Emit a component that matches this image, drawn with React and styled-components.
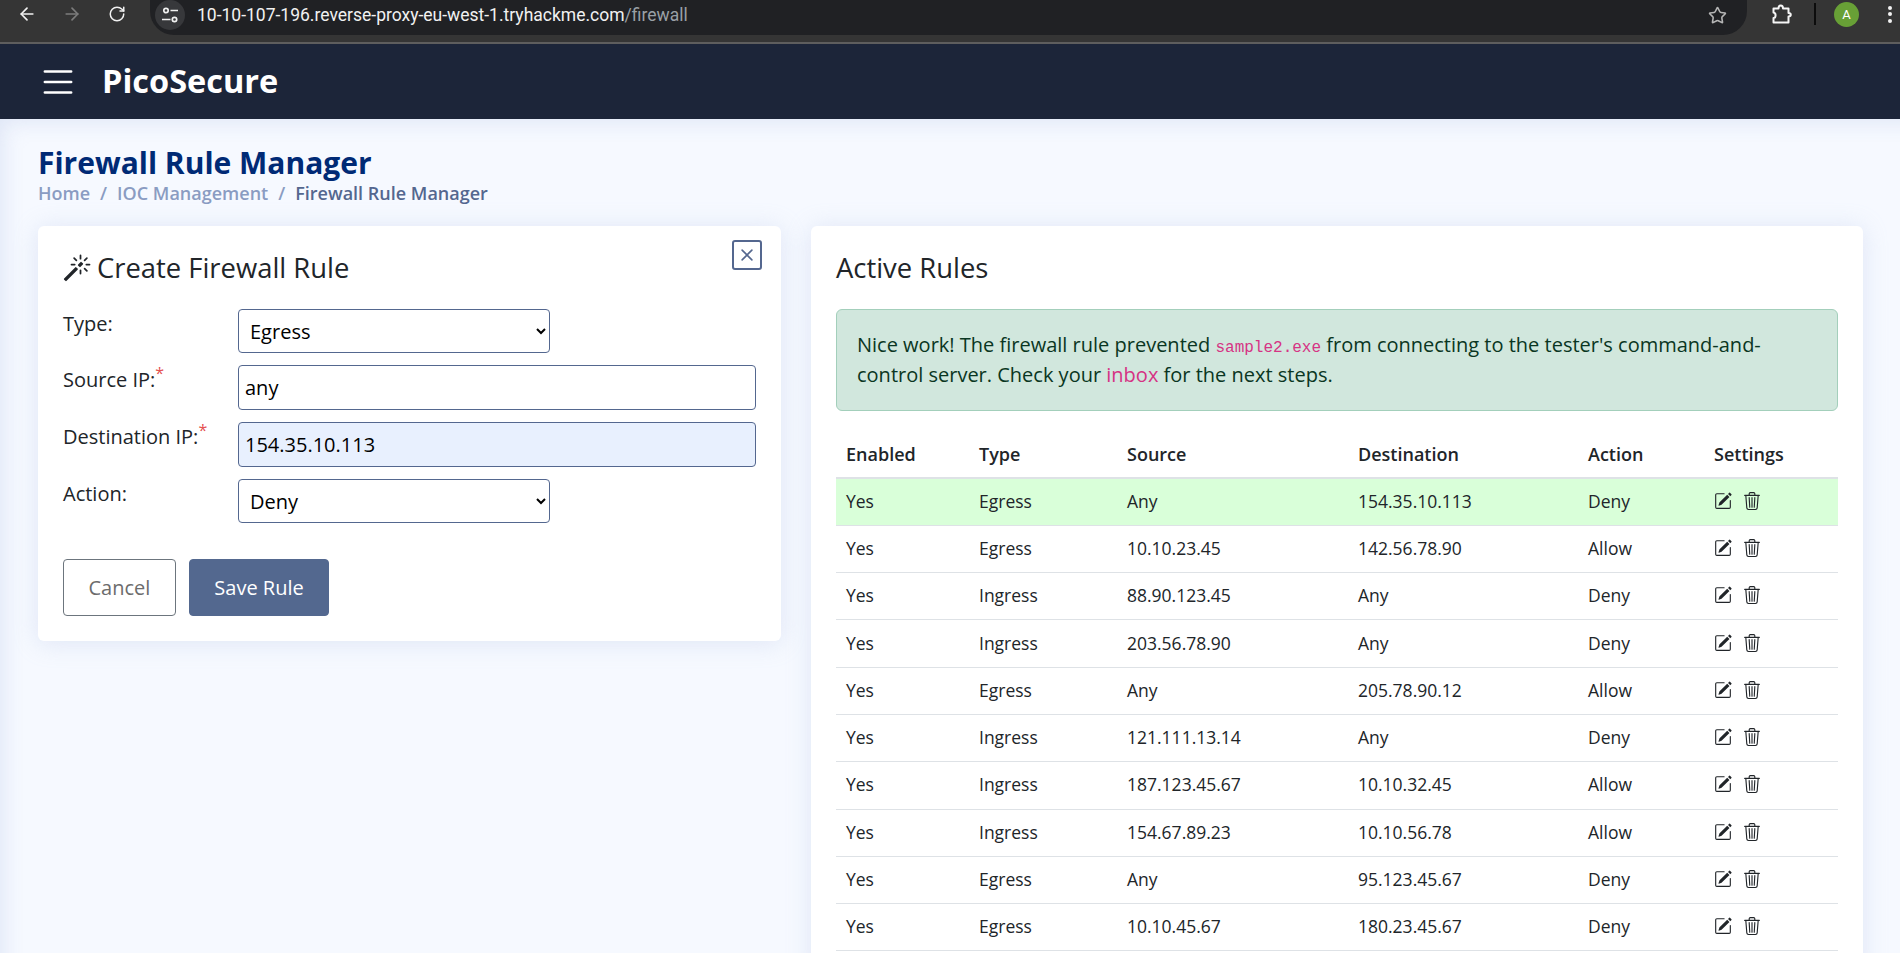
import styled, { createGlobalStyle } from 'styled-components';
import { ArrowLeft, ArrowRight, RotateCw, Star } from 'lucide-react';
import { BsList, BsMagic, BsPencilSquare, BsTrash3, BsX } from 'react-icons/bs';

const GlobalStyle = createGlobalStyle`
  * {
    box-sizing: border-box;
  }
  html,
  body {
    margin: 0;
    height: 100%;
    overflow: hidden;
  }
  body {
    font-family: 'Open Sans', 'Noto Sans', sans-serif;
    color: #212529;
    background: #f6f9ff;
  }
`;

const Screen = styled.div`
  height: 953px;
  overflow: hidden;
  display: flex;
  flex-direction: column;
`;

const BrowserBar = styled.div`
  flex: none;
  height: 44px;
  display: flex;
  align-items: flex-start;
  background: #353535;
  border-bottom: 2px solid #5e5e5e;
  padding-left: 17px;
  color: #fff;
`;

const NavButton = styled.span`
  width: 20px;
  height: 28px;
  margin-right: 25px;
  display: flex;
  align-items: center;
  justify-content: center;
  color: ${(props) => (props.$muted ? '#7c7c7c' : '#f1f1f1')};
`;

const AddressBar = styled.div`
  width: 1597px;
  height: 35px;
  margin-left: -2px;
  padding: 0 20px 5px 5px;
  display: flex;
  align-items: center;
  background: #202124;
  border-radius: 0 0 24px 24px;
`;

const TuneBadge = styled.span`
  width: 30px;
  height: 30px;
  flex: none;
  display: flex;
  align-items: center;
  justify-content: center;
  border-radius: 50%;
  background: #37383b;
  margin-right: 12px;
`;

const Url = styled.span`
  flex: 1;
  font-family: Roboto, 'Liberation Sans', sans-serif;
  font-size: 17.5px;
  color: #f1f1f1;
  white-space: nowrap;
`;

const UrlPath = styled.span`
  color: #9aa0a6;
`;

const BarTools = styled.div`
  flex: 1;
  height: 28px;
  display: flex;
  align-items: center;
  padding-left: 24px;
`;

const BarDivider = styled.span`
  width: 2px;
  height: 22px;
  margin: 0 18px 0 21px;
  background: #0c0c0c;
`;

const Avatar = styled.span`
  width: 25px;
  height: 25px;
  border-radius: 50%;
  background: #68a036;
  color: #fff;
  display: flex;
  align-items: center;
  justify-content: center;
  font-family: Roboto, sans-serif;
  font-size: 13px;
`;

const BarDots = styled.span`
  margin-left: 29px;
  display: flex;
  flex-direction: column;
  gap: 2.5px;
  i {
    width: 4px;
    height: 4px;
    border-radius: 50%;
    background: #f1f1f1;
  }
`;

const TopNav = styled.header`
  flex: none;
  height: 75px;
  display: flex;
  align-items: center;
  gap: 23px;
  padding-left: 37px;
  background: #1c2539;
  color: #fff;
`;

const Brand = styled.span`
  font-size: 32.5px;
  font-weight: 700;
  line-height: 1;
`;

const Main = styled.main`
  flex: 1;
  min-height: 0;
  padding: 25px 38px 0;
  background: #f6f9ff;
  box-shadow: inset 16px 16px 22px -14px rgba(190, 204, 232, 0.45);
`;

const PageTitle = styled.h1`
  margin: 0;
  font-size: 30px;
  line-height: 38px;
  font-weight: 700;
  color: #002a75;
`;

const Crumbs = styled.nav`
  display: flex;
  gap: 10px;
  font-size: 18px;
  line-height: 22px;
  font-weight: 600;
  color: #8a9cc2;
`;

const CrumbCurrent = styled.span`
  color: #54678f;
`;

const Columns = styled.div`
  display: grid;
  grid-template-columns: 743px 1052px;
  gap: 30px;
  align-items: start;
  margin-top: 22px;
`;

const Card = styled.section`
  position: relative;
  padding: 25px;
  background: #fff;
  border-radius: 6px;
  box-shadow: 0 2px 24px rgba(170, 186, 222, 0.3);
`;

const CardTitle = styled.h2`
  margin: 0 0 24px;
  display: flex;
  align-items: center;
  gap: 6px;
  font-size: 27.4px;
  line-height: 34px;
  font-weight: 400;
`;

const CloseButton = styled.button`
  position: absolute;
  top: 14px;
  right: 19px;
  width: 30px;
  height: 30px;
  padding: 0;
  display: flex;
  align-items: center;
  justify-content: center;
  background: #fff;
  color: #54678f;
  border: 2px solid #54678f;
  border-radius: 3px;
`;

const FormRow = styled.div`
  display: grid;
  grid-template-columns: 175px 1fr;
  margin-bottom: 12px;
`;

const FieldLabel = styled.label`
  font-size: 20px;
  line-height: 29px;
`;

const Required = styled.sup`
  color: #e4504f;
  font-size: 16px;
  line-height: 0;
`;

const SelectField = styled.select`
  width: 312px;
  height: 44px;
  padding: 0 7px;
  font-family: inherit;
  font-size: 20px;
  color: #000;
  background: #fff;
  border: 1px solid #54678f;
  border-radius: 4px;
`;

const TextField = styled.input`
  width: 518px;
  height: 45px;
  padding: 0 6px;
  font-family: inherit;
  font-size: 20px;
  color: #000;
  background: ${(props) => (props.$filled ? '#e8f0fe' : '#fff')};
  border: 1px solid #54678f;
  border-radius: 4px;
`;

const FormActions = styled.div`
  display: flex;
  gap: 13px;
  margin-top: 36px;
`;

const ActionButton = styled.button`
  height: 57px;
  padding: 0 24.5px;
  font-family: inherit;
  font-size: 20px;
  color: ${(props) => (props.$primary ? '#fff' : '#6c6c6c')};
  background: ${(props) => (props.$primary ? '#53688f' : '#fff')};
  border: 1px solid ${(props) => (props.$primary ? '#53688f' : '#6c757d')};
  border-radius: 4px;
`;

const Notice = styled.div`
  height: 102px;
  margin-bottom: 22px;
  padding: 20px;
  font-size: 20px;
  line-height: 30px;
  color: #0a3622;
  background: #d1e7dd;
  border: 1px solid #a3cfbb;
  border-radius: 6px;
`;

const InlineCode = styled.code`
  font-family: 'Liberation Mono', monospace;
  font-size: 16px;
  line-height: 1;
  color: #d63384;
`;

const NoticeLink = styled.a`
  color: #d63384;
  text-decoration: none;
`;

const RulesTable = styled.table`
  width: 100%;
  table-layout: fixed;
  border-collapse: collapse;
  font-size: 17.5px;
`;

const HeadCell = styled.th`
  height: 45px;
  padding: 0 10px 2px;
  text-align: left;
  font-size: 18px;
  font-weight: 600;
  border-bottom: 2px solid #dee2e6;
`;

const Row = styled.tr`
  background: ${(props) => (props.$active ? '#d9ffd9' : 'transparent')};
`;

const Cell = styled.td`
  height: 47.3px;
  padding: 0 10px 2px;
  border-bottom: 1px solid #dee2e6;
`;

const SettingIcons = styled.span`
  display: flex;
  align-items: center;
  gap: 11px;
  color: #212529;
`;

const columnWidths = [133, 148, 231, 230, 126, 134];

const rules = [
  ['Egress', 'Any', '154.35.10.113', 'Deny'],
  ['Egress', '10.10.23.45', '142.56.78.90', 'Allow'],
  ['Ingress', '88.90.123.45', 'Any', 'Deny'],
  ['Ingress', '203.56.78.90', 'Any', 'Deny'],
  ['Egress', 'Any', '205.78.90.12', 'Allow'],
  ['Ingress', '121.111.13.14', 'Any', 'Deny'],
  ['Ingress', '187.123.45.67', '10.10.32.45', 'Allow'],
  ['Ingress', '154.67.89.23', '10.10.56.78', 'Allow'],
  ['Egress', 'Any', '95.123.45.67', 'Deny'],
  ['Egress', '10.10.45.67', '180.23.45.67', 'Deny'],
];

function TuneIcon() {
  return (
    <svg width="18" height="18" viewBox="0 0 18 18" fill="none" stroke="#f1f1f1" strokeWidth="1.7">
      <circle cx="5" cy="4.5" r="2.2" />
      <path d="M9.5 4.5H17M1 13.5h8.5" />
      <circle cx="13.5" cy="13.5" r="2.2" />
    </svg>
  );
}

function PuzzleIcon() {
  return (
    <svg width="22" height="22" viewBox="0 0 22 22" fill="none" stroke="#f6f6f6" strokeWidth="2" strokeLinejoin="round">
      <path d="M2.500 5.500h5c0-4 4.500-4 4.500 0h5.500v4.500c3 0 3 3.500 0 3.500v6h-15v-4.500c2.500 0 3-5 0-5.500z" />
    </svg>
  );
}

export default function App() {
  return (
    <Screen>
      <GlobalStyle />
      <BrowserBar>
        <NavButton>
          <ArrowLeft size={20} />
        </NavButton>
        <NavButton $muted>
          <ArrowRight size={20} />
        </NavButton>
        <NavButton>
          <RotateCw size={18} />
        </NavButton>
        <AddressBar>
          <TuneBadge>
            <TuneIcon />
          </TuneBadge>
          <Url>
            10-10-107-196.reverse-proxy-eu-west-1.tryhackme.com<UrlPath>/firewall</UrlPath>
          </Url>
          <Star size={19} color="#b5b5b5" />
        </AddressBar>
        <BarTools>
          <PuzzleIcon />
          <BarDivider />
          <Avatar>A</Avatar>
          <BarDots>
            <i />
            <i />
            <i />
          </BarDots>
        </BarTools>
      </BrowserBar>

      <TopNav>
        <BsList size={42} />
        <Brand>PicoSecure</Brand>
      </TopNav>

      <Main>
        <PageTitle>Firewall Rule Manager</PageTitle>
        <Crumbs>
          <span>Home</span>
          <span>/</span>
          <span>IOC Management</span>
          <span>/</span>
          <CrumbCurrent>Firewall Rule Manager</CrumbCurrent>
        </Crumbs>

        <Columns>
          <Card>
            <CardTitle>
              <BsMagic size={28} />
              Create Firewall Rule
            </CardTitle>
            <CloseButton aria-label="Close">
              <BsX size={28} />
            </CloseButton>
            <FormRow>
              <FieldLabel>Type:</FieldLabel>
              <SelectField defaultValue="Egress">
                <option>Egress</option>
                <option>Ingress</option>
              </SelectField>
            </FormRow>
            <FormRow>
              <FieldLabel>
                Source IP:<Required>*</Required>
              </FieldLabel>
              <TextField defaultValue="any" />
            </FormRow>
            <FormRow>
              <FieldLabel>
                Destination IP:<Required>*</Required>
              </FieldLabel>
              <TextField $filled defaultValue="154.35.10.113" />
            </FormRow>
            <FormRow>
              <FieldLabel>Action:</FieldLabel>
              <SelectField defaultValue="Deny">
                <option>Deny</option>
                <option>Allow</option>
              </SelectField>
            </FormRow>
            <FormActions>
              <ActionButton>Cancel</ActionButton>
              <ActionButton $primary>Save Rule</ActionButton>
            </FormActions>
          </Card>

          <Card>
            <CardTitle>Active Rules</CardTitle>
            <Notice>
              Nice work! The firewall rule prevented <InlineCode>sample2.exe</InlineCode> from connecting to the
              tester's command-and-control server. Check your <NoticeLink href="#inbox">inbox</NoticeLink> for the next
              steps.
            </Notice>
            <RulesTable>
              <colgroup>
                {columnWidths.map((width) => (
                  <col key={width} width={width} />
                ))}
              </colgroup>
              <thead>
                <tr>
                  {['Enabled', 'Type', 'Source', 'Destination', 'Action', 'Settings'].map((title) => (
                    <HeadCell key={title}>{title}</HeadCell>
                  ))}
                </tr>
              </thead>
              <tbody>
                {rules.map((rule, index) => (
                  <Row key={rule.join()} $active={index === 0}>
                    <Cell>Yes</Cell>
                    {rule.map((value, column) => (
                      <Cell key={column}>{value}</Cell>
                    ))}
                    <Cell>
                      <SettingIcons>
                        <BsPencilSquare size={18} />
                        <BsTrash3 size={18} />
                      </SettingIcons>
                    </Cell>
                  </Row>
                ))}
              </tbody>
            </RulesTable>
          </Card>
        </Columns>
      </Main>
    </Screen>
  );
}
